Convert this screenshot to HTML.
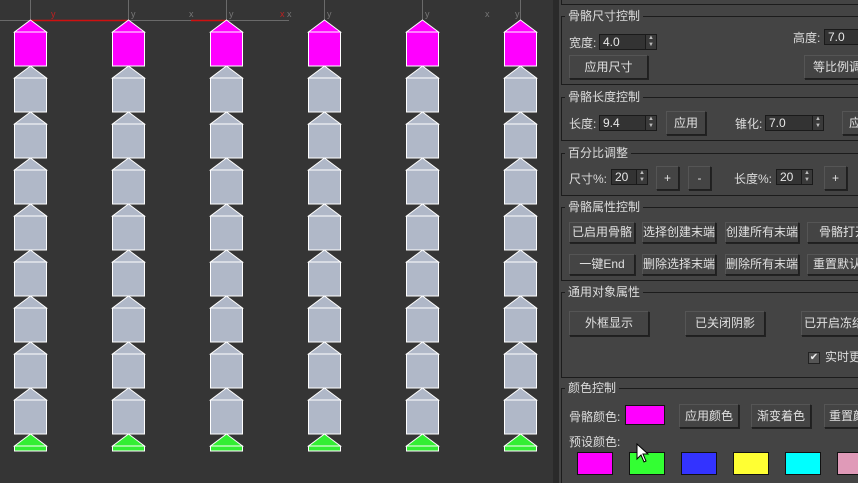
<!DOCTYPE html>
<html><head><meta charset="utf-8"><style>
*{margin:0;padding:0;box-sizing:border-box}
html,body{width:858px;height:483px;overflow:hidden}
body{background:#333;font-family:"Liberation Sans","Noto Sans CJK SC",sans-serif;font-size:12px;color:#dcdcdc;position:relative}
#vp{position:absolute;left:0;top:0;width:553px;height:483px;background:#353535}
#sep{position:absolute;left:553px;top:0;width:6px;height:483px;background:#2a2a2a}
#pn{position:absolute;left:559px;top:0;width:299px;height:483px;background:#444}
.a{position:absolute;white-space:nowrap}
.g{position:absolute;border:1px solid #1c1c1c;border-right:none}
.gt{position:absolute;background:#444;padding:0 3px;line-height:14px;font-size:12px}
.in{position:absolute;background:#333;border:1px solid #1a1a1a;border-right:none;height:16px;line-height:14px;padding-left:3px;color:#e8e8e8;font-size:12px}
.sp{position:absolute;width:12px;height:16px;background:#3a3a3a;border:1px solid #1a1a1a;font-size:6px;line-height:7px;text-align:center;color:#bbb}
.b{position:absolute;background:#444;border:1px solid #1f1f1f;border-top-color:#555;border-left-color:#555;text-align:center;font-size:12px;color:#e0e0e0;box-shadow:1px 1px 0 #222;white-space:nowrap;overflow:hidden}
.sw{position:absolute;border:1px solid #111}
</style></head><body>
<div id="vp">
<svg width="553" height="483" xmlns="http://www.w3.org/2000/svg">
<line x1="0" y1="20.5" x2="289" y2="20.5" stroke="#6a6a6a"/>
<line x1="30.5" y1="0" x2="30.5" y2="20" stroke="#6a6a6a"/>
<line x1="128.5" y1="0" x2="128.5" y2="20" stroke="#6a6a6a"/>
<line x1="226.5" y1="0" x2="226.5" y2="20" stroke="#6a6a6a"/>
<line x1="324.5" y1="0" x2="324.5" y2="20" stroke="#6a6a6a"/>
<line x1="422.5" y1="0" x2="422.5" y2="20" stroke="#6a6a6a"/>
<line x1="520.5" y1="0" x2="520.5" y2="20" stroke="#6a6a6a"/>
<line x1="30" y1="20.5" x2="128" y2="20.5" stroke="#d01010" stroke-width="1.5"/>
<line x1="191" y1="20.5" x2="226" y2="20.5" stroke="#d01010" stroke-width="1.5"/>
<g font-family="Liberation Sans" font-size="9" fill="#777">
<text x="51" y="17" fill="#c02020">y</text><text x="131" y="17">y</text>
<text x="189" y="17">x</text><text x="229" y="17">y</text>
<text x="280" y="17" fill="#c02020">x</text><text x="287" y="17">x</text>
<text x="327" y="17">y</text><text x="425" y="17">y</text>
<text x="485" y="17">x</text><text x="515" y="17">y</text>
</g>
<defs>
<g id="bone">
<polygon points="0,0 16,12 -16,12" fill="#b0b8c8" stroke="#fff" stroke-width="1"/>
<rect x="-16" y="12" width="32" height="34" fill="#b0b8c8" stroke="#fff" stroke-width="1"/>
</g>
<g id="mbone">
<polygon points="0,0 16,12 -16,12" fill="#ff00ff" stroke="#fff" stroke-width="1"/>
<rect x="-16" y="12" width="32" height="34" fill="#ff00ff" stroke="#fff" stroke-width="1"/>
</g>
<g id="col">
<use href="#mbone" y="20"/>
<use href="#bone" y="66"/><use href="#bone" y="112"/><use href="#bone" y="158"/><use href="#bone" y="204"/>
<use href="#bone" y="250"/><use href="#bone" y="296"/><use href="#bone" y="342"/><use href="#bone" y="388"/>
<polygon points="0,434 16,446 -16,446" fill="#33ee33" stroke="#fff"/>
<rect x="-16" y="446" width="32" height="5" fill="#33ee33" stroke="#fff"/>
</g>
</defs>
<use href="#col" x="30.5"/><use href="#col" x="128.5"/><use href="#col" x="226.5"/>
<use href="#col" x="324.5"/><use href="#col" x="422.5"/><use href="#col" x="520.5"/>
</svg>
</div>
<div id="sep"></div>
<div id="pn"></div>

<div class="g" style="left:561px;top:-10px;width:297px;height:15px;border-top:none"></div>

<div class="g" style="left:561px;top:16px;width:297px;height:69px"></div>
<div class="gt a" style="left:565px;top:9px">骨骼尺寸控制</div>
<div class="a" style="left:569px;top:34px">宽度:</div>
<div class="in" style="left:599px;top:34px;width:46px">4.0</div><div class="sp" style="left:645px;top:34px">▲<br>▼</div>
<div class="a" style="left:793px;top:29px">高度:</div>
<div class="in" style="left:824px;top:29px;width:40px">7.0</div>
<div class="b" style="left:569px;top:55px;width:79px;height:24px;line-height:22px">应用尺寸</div>
<div class="b" style="left:804px;top:55px;width:60px;height:24px;line-height:22px;text-align:left;padding-left:8px">等比例调</div>

<div class="g" style="left:561px;top:97px;width:297px;height:44px"></div>
<div class="gt a" style="left:565px;top:90px">骨骼长度控制</div>
<div class="a" style="left:569px;top:115px">长度:</div>
<div class="in" style="left:599px;top:115px;width:46px">9.4</div><div class="sp" style="left:645px;top:115px">▲<br>▼</div>
<div class="b" style="left:666px;top:111px;width:40px;height:24px;line-height:22px">应用</div>
<div class="a" style="left:735px;top:115px">锥化:</div>
<div class="in" style="left:765px;top:115px;width:47px">7.0</div><div class="sp" style="left:812px;top:115px">▲<br>▼</div>
<div class="b" style="left:842px;top:111px;width:30px;height:24px;line-height:22px;text-align:left;padding-left:6px">应</div>

<div class="g" style="left:561px;top:153px;width:297px;height:43px"></div>
<div class="gt a" style="left:565px;top:146px">百分比调整</div>
<div class="a" style="left:569px;top:170px">尺寸%:</div>
<div class="in" style="left:611px;top:169px;width:25px">20</div><div class="sp" style="left:636px;top:169px">▲<br>▼</div>
<div class="b" style="left:656px;top:166px;width:23px;height:24px;line-height:22px">+</div>
<div class="b" style="left:688px;top:166px;width:23px;height:24px;line-height:22px">-</div>
<div class="a" style="left:734px;top:170px">长度%:</div>
<div class="in" style="left:776px;top:169px;width:25px">20</div><div class="sp" style="left:801px;top:169px">▲<br>▼</div>
<div class="b" style="left:824px;top:166px;width:23px;height:24px;line-height:22px">+</div>

<div class="g" style="left:561px;top:207px;width:297px;height:74px"></div>
<div class="gt a" style="left:565px;top:200px">骨骼属性控制</div>
<div class="b" style="left:569px;top:222px;width:66px;height:21px;line-height:19px">已启用骨骼</div>
<div class="b" style="left:642px;top:222px;width:74px;height:21px;line-height:19px">选择创建末端</div>
<div class="b" style="left:725px;top:222px;width:74px;height:21px;line-height:19px">创建所有末端</div>
<div class="b" style="left:807px;top:222px;width:60px;height:21px;line-height:19px;text-align:left;padding-left:11px">骨骼打开</div>
<div class="b" style="left:569px;top:254px;width:66px;height:21px;line-height:19px">一键End</div>
<div class="b" style="left:642px;top:254px;width:74px;height:21px;line-height:19px">删除选择末端</div>
<div class="b" style="left:725px;top:254px;width:74px;height:21px;line-height:19px">删除所有末端</div>
<div class="b" style="left:807px;top:254px;width:60px;height:21px;line-height:19px;text-align:left;padding-left:5px">重置默认</div>

<div class="g" style="left:561px;top:292px;width:297px;height:86px"></div>
<div class="gt a" style="left:565px;top:285px">通用对象属性</div>
<div class="b" style="left:569px;top:311px;width:80px;height:25px;line-height:23px">外框显示</div>
<div class="b" style="left:685px;top:311px;width:80px;height:25px;line-height:23px">已关闭阴影</div>
<div class="b" style="left:801px;top:311px;width:70px;height:25px;line-height:23px;text-align:left;padding-left:2px">已开启冻结</div>
<div class="a" style="left:808px;top:352px;width:12px;height:12px;background:#555;border:1px solid #222;font-size:10px;line-height:10px;text-align:center;color:#eee">✔</div>
<div class="a" style="left:825px;top:348px">实时更新</div>

<div class="g" style="left:561px;top:388px;width:297px;height:100px"></div>
<div class="gt a" style="left:565px;top:381px">颜色控制</div>
<div class="a" style="left:569px;top:408px">骨骼颜色:</div>
<div class="sw" style="left:625px;top:405px;width:40px;height:20px;background:#ff00ff"></div>
<div class="b" style="left:679px;top:404px;width:60px;height:24px;line-height:22px">应用颜色</div>
<div class="b" style="left:751px;top:404px;width:60px;height:24px;line-height:22px">渐变着色</div>
<div class="b" style="left:824px;top:404px;width:50px;height:24px;line-height:22px;text-align:left;padding-left:4px">重置颜色</div>
<div class="a" style="left:569px;top:433px">预设颜色:</div>
<div class="sw" style="left:577px;top:452px;width:36px;height:23px;background:#ff00ff"></div>
<div class="sw" style="left:629px;top:452px;width:36px;height:23px;background:#33ff33"></div>
<div class="sw" style="left:681px;top:452px;width:36px;height:23px;background:#3333ff"></div>
<div class="sw" style="left:733px;top:452px;width:36px;height:23px;background:#ffff33"></div>
<div class="sw" style="left:785px;top:452px;width:36px;height:23px;background:#00ffff"></div>
<div class="sw" style="left:837px;top:452px;width:36px;height:23px;background:#e09ab8"></div>
<svg class="a" style="left:636px;top:443px" width="14" height="20"><polygon points="1,1 1,16 5,12 8,19 10,18 7,11 12,11" fill="#fff" stroke="#000" stroke-width="1"/></svg>
</body></html>
